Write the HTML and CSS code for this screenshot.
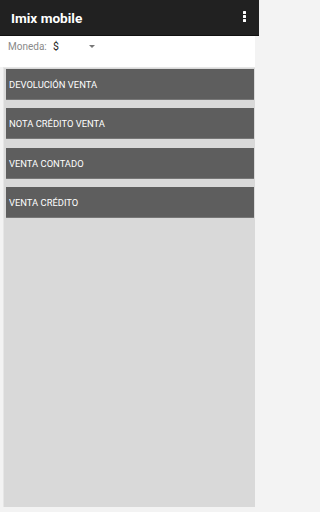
FILE: index.html
```html
<!DOCTYPE html>
<html lang="es">
<head>
<meta charset="utf-8">
<link rel="stylesheet" href="styles.css">
</head>
<body>
<div class="app">
  <header class="toolbar">
    <span class="title">Imix mobile</span>
    <span class="kebab"><i></i><i></i><i></i></span>
  </header>
  <div class="filter">
    <span class="label">Moneda:</span>
    <span class="value">$</span>
    <span class="caret"></span>
  </div>
  <div class="panel">
    <div class="btn">DEVOLUCIÓN VENTA</div>
    <div class="btn">NOTA CRÉDITO VENTA</div>
    <div class="btn">VENTA CONTADO</div>
    <div class="btn">VENTA CRÉDITO</div>
  </div>
</div>
</body>
</html>
```

FILE: styles.css
```css
html, body {
  margin: 0;
  padding: 0;
}
body {
  width: 259px;
  height: 512px;
  background: #f3f3f3;
  font-family: Roboto, "Liberation Sans", sans-serif;
  overflow: hidden;
}
.app {
  display: flex;
  flex-direction: column;
  height: 512px;
}
.toolbar {
  height: 36px;
  background: #212121;
  display: flex;
  align-items: center;
  justify-content: space-between;
  padding: 0 13px 0 11px;
  box-sizing: border-box;
  border-bottom: 1px solid #111;
}
.title {
  color: #fff;
  font-size: 13.6px;
  font-weight: 700;
  margin-top: 1px;
}
.kebab {
  display: flex;
  flex-direction: column;
  gap: 1.6px;
  margin-top: -2px;
}
.kebab i {
  display: block;
  width: 2.6px;
  height: 2.6px;
  background: #fff;
  border-radius: 0.5px;
}
.filter {
  height: 31px;
  background: #fff;
  margin-right: 4px;
  display: flex;
  align-items: center;
  padding: 0 0 10px 8px;
  box-sizing: border-box;
}
.label {
  color: #8a8a8a;
  font-size: 10px;
  width: 45px;
}
.value {
  color: #222;
  font-size: 10.5px;
  width: 36px;
}
.caret {
  width: 0;
  height: 0;
  border-left: 3px solid transparent;
  border-right: 3px solid transparent;
  border-top: 3px solid #777;
  margin-top: -1px;
}
.panel {
  margin: 0 4px 5px 3px;
  flex: 1;
  background: #d9d9d9;
  border-left: 1px solid #e6e6e6;
  border-top: 1px solid #e6e6e6;
  padding: 1px 1px 0 2px;
  display: flex;
  flex-direction: column;
  gap: 8.3px;
}
.btn {
  height: 31px;
  background: #5e5e5e;
  color: #fff;
  font-size: 9.4px;
  display: flex;
  align-items: center;
  padding: 1px 0 0 3px;
  border-bottom: 1px solid #777;
  box-sizing: border-box;
}
```
